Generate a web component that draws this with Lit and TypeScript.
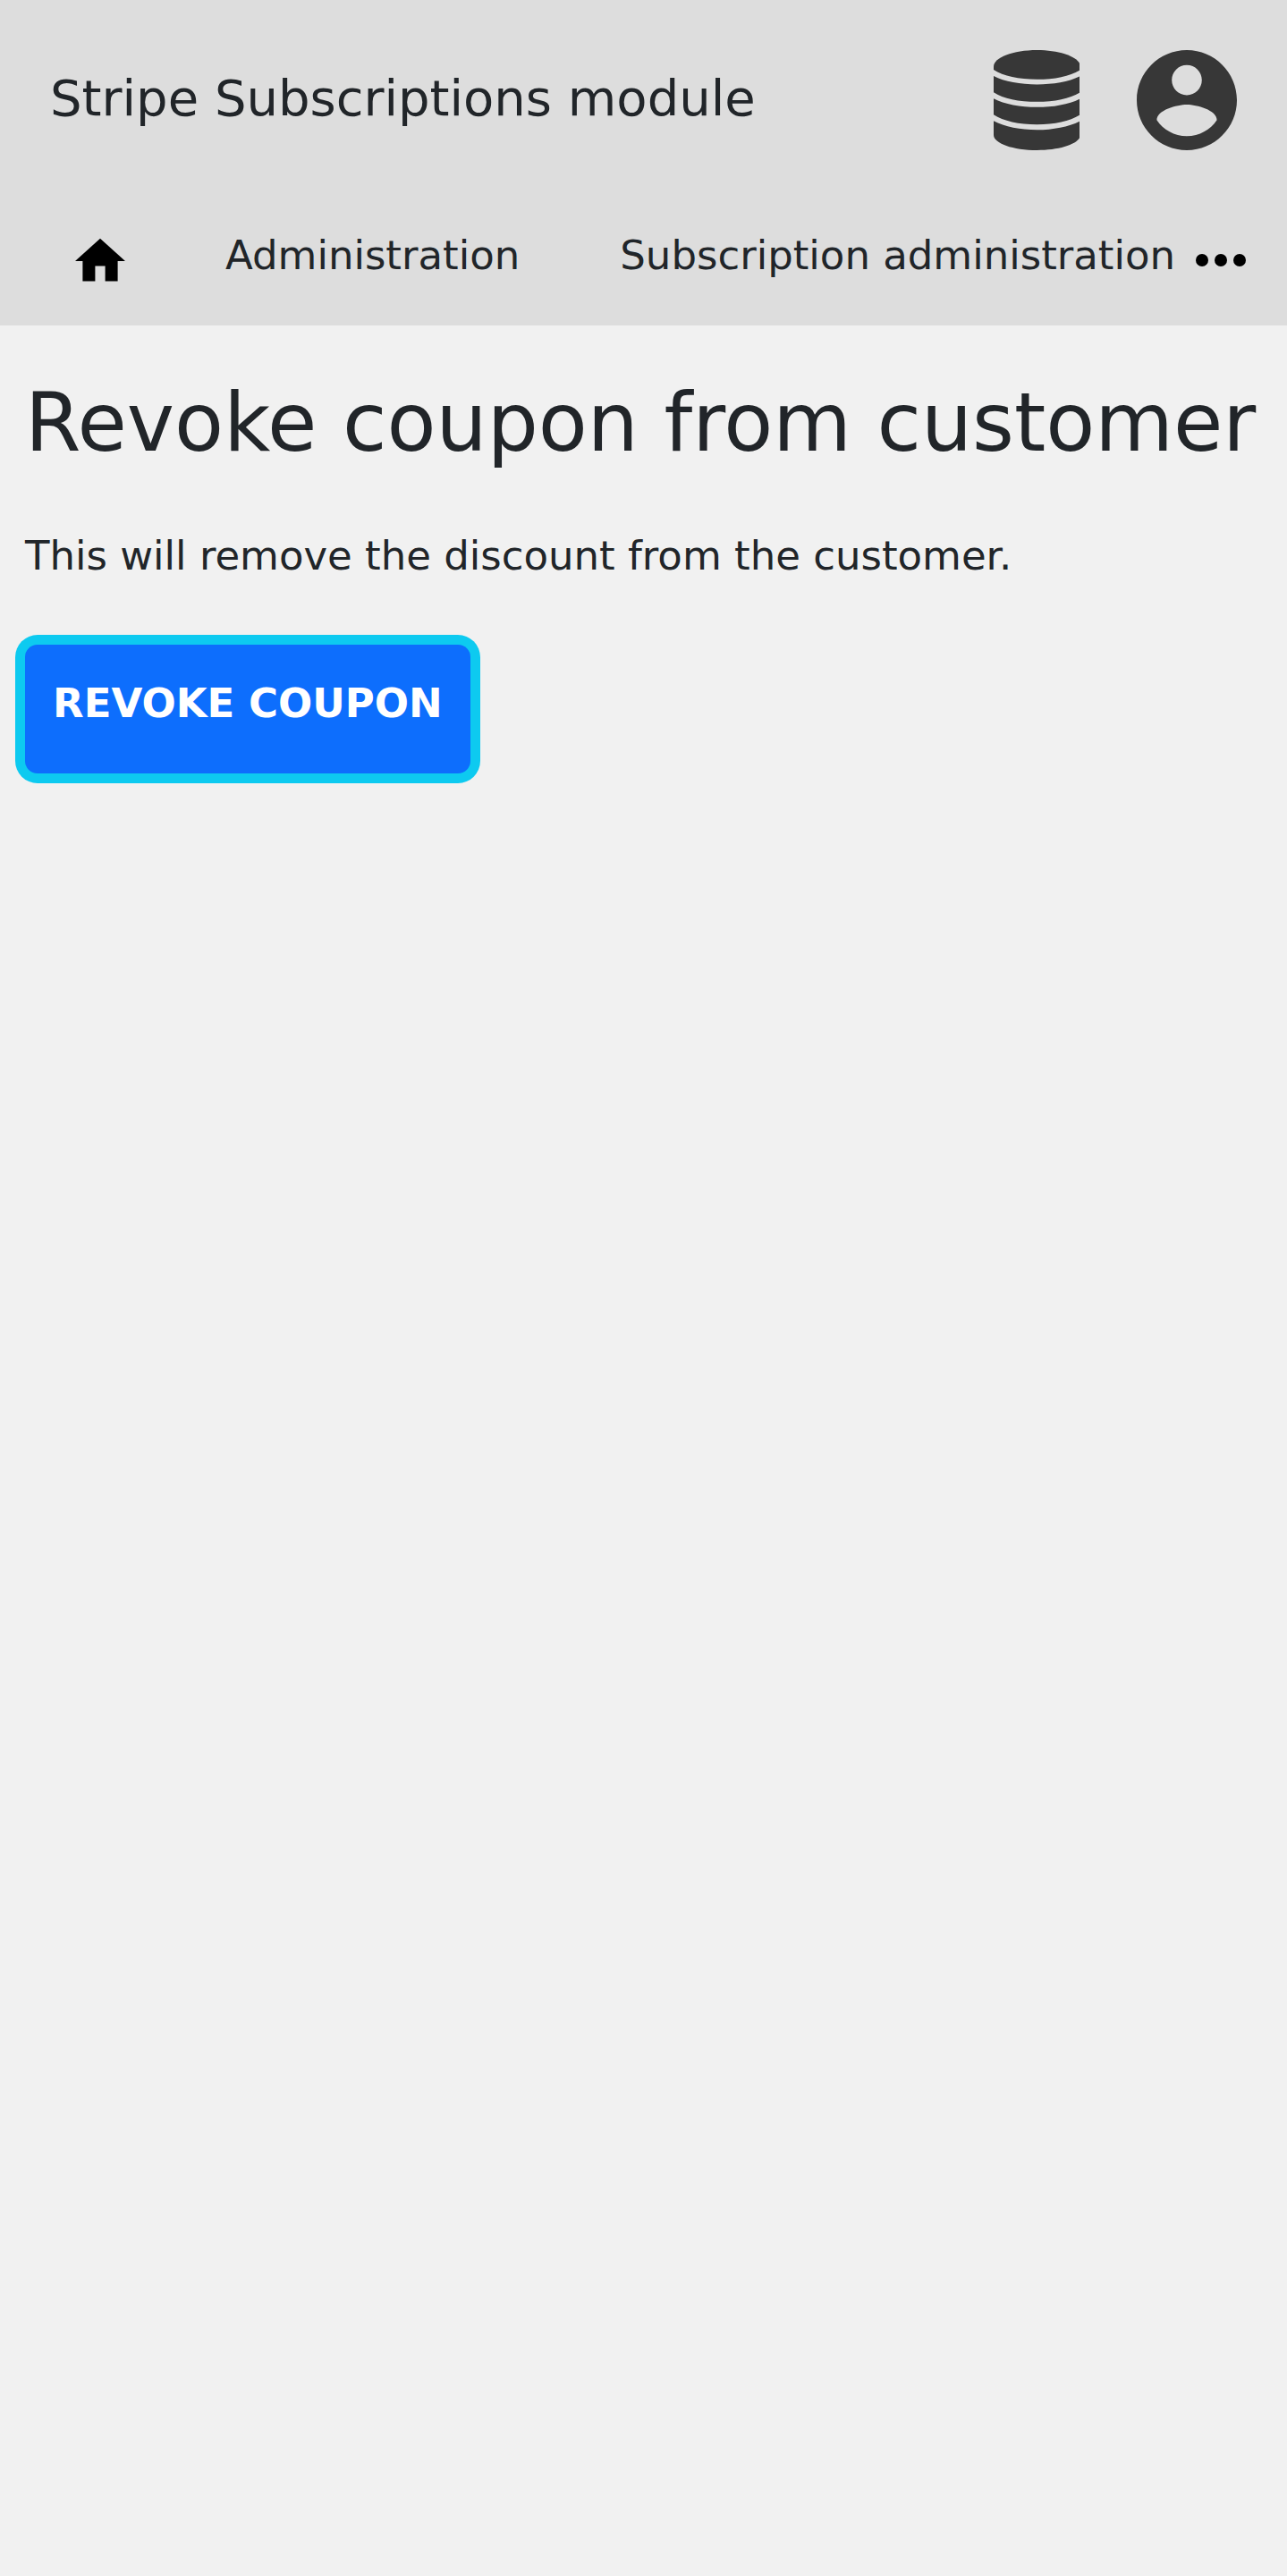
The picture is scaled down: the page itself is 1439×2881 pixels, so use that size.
import { LitElement, html, css } from "lit";
import { customElement } from "lit/decorators.js";

@customElement("app-header")
export class AppHeader extends LitElement {
  static styles = css`
    :host {
      display: block;
      background: #ddd;
    }
    .bar {
      display: flex;
      align-items: flex-start;
      justify-content: space-between;
      gap: 56px;
      padding: 56px;
    }
    .brand {
      color: inherit;
      text-decoration: none;
      font-size: 56px;
      line-height: 108px;
      white-space: nowrap;
    }
    .tools {
      display: flex;
      gap: 56px;
    }
    .icon-button {
      display: flex;
      justify-content: center;
      width: 112px;
      padding: 0;
      border: 0;
      background: none;
      color: #373737;
      cursor: pointer;
    }
    svg {
      display: block;
      fill: currentColor;
    }
    .large {
      height: 112px;
    }
    .small {
      width: 56px;
      height: 56px;
    }
    .nav {
      display: flex;
      align-items: flex-start;
      padding: 28px 46px 44px 28px;
    }
    .link {
      padding: 0 56px;
      color: inherit;
      text-decoration: none;
      line-height: 68px;
      white-space: nowrap;
    }
    .home {
      padding-top: 12px;
      color: #000;
    }
    .last {
      padding-right: 0;
    }
    .more {
      width: 56px;
      margin-left: auto;
      padding-top: 11px;
      color: #000;
    }
  `;

  render() {
    return html`
      <header>
        <div class="bar">
          <a class="brand" href="#">Stripe Subscriptions module</a>
          <div class="tools">
            <button class="icon-button" type="button" aria-label="Data">
              <svg class="large" viewBox="0 0 290 335" aria-hidden="true">
                <path d="M0 55C0 25 65 0 145 0s145 25 145 55v11c-32 21-85 32-145 32S32 87 0 66z" />
                <path d="M0 87c36 19 90 28 145 28s109-9 145-28v54c-32 21-85 32-145 32S32 162 0 141z" />
                <path d="M0 162c36 19 90 29 145 29s109-10 145-29v54c-32 21-85 33-145 33S32 237 0 216z" />
                <path d="M0 237c36 19 90 30 145 30s109-11 145-30v47c0 28-65 51-145 51S0 312 0 284z" />
              </svg>
            </button>
            <button class="icon-button" type="button" aria-label="Account">
              <svg class="large" viewBox="2 2 20 20" aria-hidden="true">
                <path
                  d="M12 2C6.480 2 2 6.480 2 12s4.480 10 10 10 10-4.480 10-10S17.520 2 12 2zm0 3c1.660 0 3 1.340 3 3s-1.340 3-3 3-3-1.340-3-3 1.340-3 3-3zm0 14.200c-2.500 0-4.710-1.280-6-3.220.030-1.990 4-3.080 6-3.080 1.990 0 5.970 1.090 6 3.080-1.290 1.940-3.500 3.220-6 3.220z"
                />
              </svg>
            </button>
          </div>
        </div>
        <nav class="nav" aria-label="Main">
          <a class="link home" href="#home" aria-label="Home">
            <svg class="small" viewBox="2 2 20 20" aria-hidden="true">
              <path d="M10 20v-6h4v6h5v-8h3L12 3 2 12h3v8z" />
            </svg>
          </a>
          <a class="link" href="#administration">Administration</a>
          <a class="link last" href="#subscriptions">Subscription administration</a>
          <button class="icon-button more" type="button" aria-label="More">
            <svg class="small" viewBox="4 4 16 16" aria-hidden="true">
              <circle cx="6" cy="12" r="2" />
              <circle cx="12" cy="12" r="2" />
              <circle cx="18" cy="12" r="2" />
            </svg>
          </button>
        </nav>
      </header>
    `;
  }
}

@customElement("app-root")
export class AppRoot extends LitElement {
  static styles = css`
    :host {
      display: block;
      min-height: 100vh;
      background: #f1f1f1;
      color: #212529;
      font-family: "DejaVu Sans", sans-serif;
      font-size: 45px;
      line-height: 68px;
    }
    .content {
      padding: 55px 28px;
    }
    .heading {
      margin: 0 0 61px;
      font-size: 90px;
      font-weight: 400;
      line-height: 108px;
    }
    .text {
      margin: 0 0 65px;
    }
    .submit {
      padding: 32px 31px 44px;
      border: 0;
      border-radius: 14px;
      background: #0d6efd;
      box-shadow: 0 0 0 11px #0dcaf0;
      color: #fff;
      font: inherit;
      font-weight: 700;
      text-transform: uppercase;
      cursor: pointer;
    }
  `;

  render() {
    return html`
      <app-header></app-header>
      <main class="content">
        <h1 class="heading">Revoke coupon from customer</h1>
        <p class="text">This will remove the discount from the customer.</p>
        <button class="submit" type="button">Revoke coupon</button>
      </main>
    `;
  }
}
